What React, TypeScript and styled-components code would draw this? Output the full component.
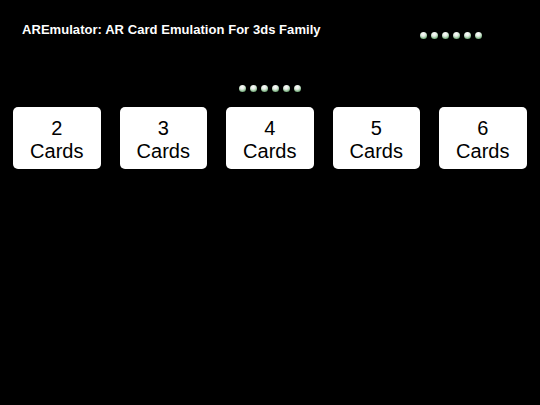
import React from "react";
import styled, { createGlobalStyle } from "styled-components";

const GlobalStyle = createGlobalStyle`
  html, body {
    margin: 0;
    padding: 0;
    background: #000;
  }
  body {
    font-family: "Liberation Sans", Arial, sans-serif;
  }
`;

const Page = styled.div`
  width: 540px;
  height: 405px;
  background: #000;
  box-sizing: border-box;
  padding: 20px 13px 0 13px;
  display: flex;
  flex-direction: column;
`;

const Header = styled.div`
  display: flex;
  align-items: flex-start;
`;

const Title = styled.h1`
  margin: 2px 0 0 9px;
  font-size: 13px;
  line-height: 16px;
  font-weight: bold;
  color: #fff;
  white-space: nowrap;
  letter-spacing: 0.05px;
`;

const DotRow = styled.div<{ $top: number }>`
  display: flex;
  gap: 4px;
  margin-top: ${(p) => p.$top}px;
`;

const HeaderDots = styled(DotRow)`
  margin-left: auto;
  margin-right: 45px;
`;

const CenterDots = styled(DotRow)`
  align-self: center;
`;

const Dot = styled.span`
  width: 7px;
  height: 7px;
  border-radius: 50%;
  background: radial-gradient(
    circle at 45% 30%,
    #ffffff 0%,
    #e4ebe4 35%,
    #8fbf94 65%,
    #3f7a48 100%
  );
`;

const CardRow = styled.div`
  display: flex;
  gap: 19px;
  margin-top: 15px;
`;

const Card = styled.button`
  width: 87.5px;
  height: 62px;
  border: none;
  border-radius: 5px;
  background: #fff;
  color: #000;
  padding: 3px 0 0;
  display: flex;
  flex-direction: column;
  align-items: center;
  justify-content: center;
  font-family: "Liberation Sans", Arial, sans-serif;
  font-size: 20px;
  line-height: 23px;
`;

const Dots = () => (
  <>
    {[0, 1, 2, 3, 4, 5].map((i) => (
      <Dot key={i} />
    ))}
  </>
);

const App = () => {
  const counts = [2, 3, 4, 5, 6];

  return (
    <>
      <GlobalStyle />
      <Page>
        <Header>
          <Title>AREmulator: AR Card Emulation For 3ds Family</Title>
          <HeaderDots $top={12}>
            <Dots />
          </HeaderDots>
        </Header>
        <CenterDots $top={46}>
          <Dots />
        </CenterDots>
        <CardRow>
          {counts.map((n) => (
            <Card key={n}>
              <span>{n}</span>
              <span>Cards</span>
            </Card>
          ))}
        </CardRow>
      </Page>
    </>
  );
};

export default App;
